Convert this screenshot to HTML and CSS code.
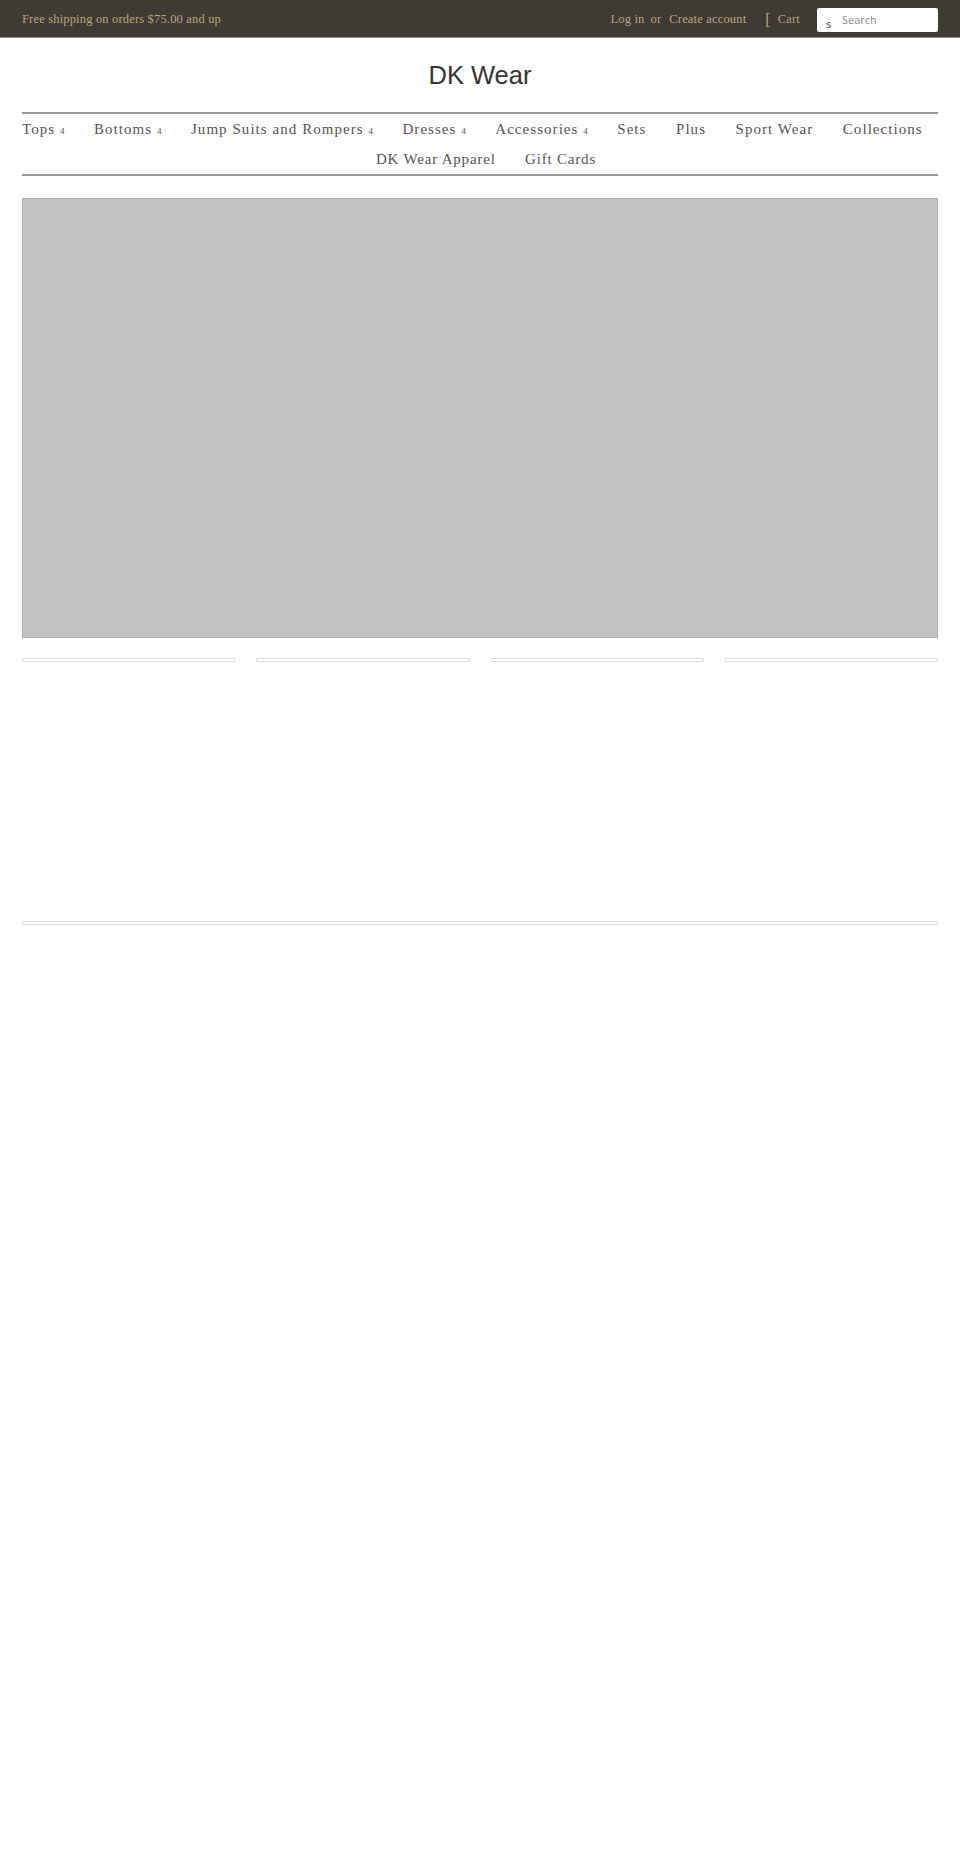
FILE: index.html
```html
<!DOCTYPE html>
<html lang="en">
<head>
<meta charset="utf-8">
<title>DK Wear</title>
<link rel="stylesheet" href="styles.css">
</head>
<body>
<header class="topbar">
  <div class="promo">Free shipping on orders $75.00 and up</div>
  <div class="account">
    <a href="#">Log in</a><span class="or">or</span><a href="#">Create account</a>
    <span class="cart-icon">[</span><a href="#" class="cart">Cart</a>
    <form class="search"><span class="search-icon">s</span><span class="placeholder">Search</span></form>
  </div>
</header>
<div class="logo">DK Wear</div>
<nav class="nav">
  <div class="nav-row">
    <a href="#">Tops <i>4</i></a>
    <a href="#">Bottoms <i>4</i></a>
    <a href="#">Jump Suits and Rompers <i>4</i></a>
    <a href="#">Dresses <i>4</i></a>
    <a href="#">Accessories <i>4</i></a>
    <a href="#">Sets</a>
    <a href="#">Plus</a>
    <a href="#">Sport Wear</a>
    <a href="#">Collections</a>
  </div>
  <div class="nav-row nav-row-second">
    <a href="#">DK Wear Apparel</a>
    <a href="#">Gift Cards</a>
  </div>
</nav>
<main class="main">
  <div class="hero"></div>
  <div class="thumbs">
    <div class="frame"></div>
    <div class="frame"></div>
    <div class="frame"></div>
    <div class="frame"></div>
  </div>
  <div class="frame wide"></div>
</main>
</body>
</html>
```
FILE: styles.css
```css
* { box-sizing: border-box; }
html, body { margin: 0; padding: 0; background: #fff; }
body { height: 1875px; overflow: hidden; font-family: "Liberation Serif", serif; }
a { color: inherit; text-decoration: none; }
.topbar {
  height: 38px;
  background: #403a35;
  border-bottom: 1px solid #8a8a8a;
  color: #bca57c;
  padding: 2px 22px 0;
  display: flex;
  justify-content: space-between;
  align-items: center;
  font-family: "Liberation Serif", serif;
  font-size: 12.5px;
  letter-spacing: 0.17px;
}
.account { display: flex; align-items: center; }
.or { margin: 0 8px 0 6px; }
.cart-icon { margin: 0 7px 0 19px; font-size: 16px; line-height: 1; }
.search {
  width: 121px;
  height: 24px;
  margin-left: 17px;
  background: #fff;
  border-radius: 2px;
  display: flex;
  align-items: center;
  font-family: "Open Sans", sans-serif;
  font-size: 11px;
  letter-spacing: 0;
  color: #8b8b8b;
}
.search-icon { width: 25px; padding: 7px 0 0 9px; color: #666; font-weight: 600; }
.logo {
  text-align: center;
  font-family: "Liberation Sans", sans-serif;
  font-size: 25.5px;
  line-height: 32px;
  color: #333;
  padding: 21px 0;
}
.nav {
  margin: 0 22px;
  height: 64px;
  border-top: 2px solid #999;
  border-bottom: 2px solid #999;
  font-size: 15px;
  line-height: 30px;
  letter-spacing: 1.05px;
  color: #555;
}
.nav-row { display: flex; column-gap: 29.5px; height: 30px; }
.nav-row-second { justify-content: center; padding-left: 12px; letter-spacing: 0.8px; }
.nav a { white-space: nowrap; }
.nav i { font-style: normal; font-size: 9px; letter-spacing: 0; }
.main { padding: 22px 22px 0; }
.hero { height: 440px; background: #c3c3c3; border: 1px solid #aaa; }
.thumbs { display: grid; grid-template-columns: repeat(4, 1fr); column-gap: 21px; margin-top: 20px; }
.frame { height: 4px; border: 1px solid #ddd; border-radius: 1px; background: #fff; }
.wide { margin-top: 259px; }
```
